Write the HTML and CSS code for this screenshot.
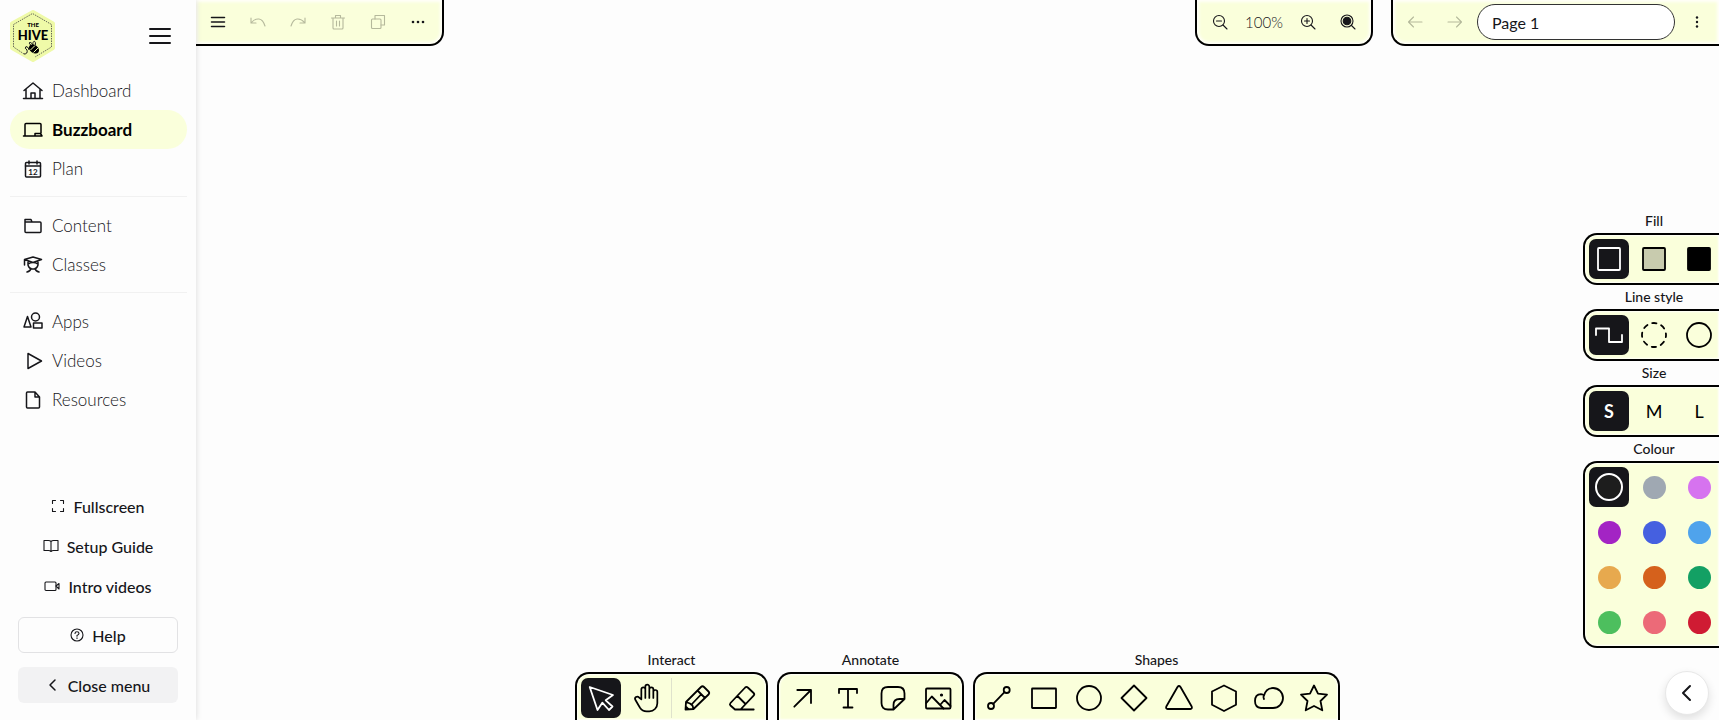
FILE: index.html
```html
<!DOCTYPE html>
<html lang="en">
<head>
  <meta charset="UTF-8">
  <meta name="viewport" content="width=device-width, initial-scale=1.0">
  <title>Buzzboard</title>
  <link rel="stylesheet" href="styles.css">
</head>
<body>
  <aside class="sidebar">
    <div class="sidebar-head">
      <a href="#" class="logo" aria-label="The Hive">
        <svg width="48" height="54" viewBox="0 0 48 54">
          <path class="logo-bg" d="M24 3 L44 14.500 V39 L24 51 L3 39 V14.500 Z"/>
          <path class="logo-line" d="M15 45 L4.500 38 V15.500 L23.500 4.500 L42.500 15.500 V38 L26 48"/>
          <text class="logo-the" x="24" y="18">THE</text>
          <text class="logo-name" x="24" y="31">HIVE</text>
          <path class="logo-bee" d="M15 45 Q19 45 18 41 Q15 39 17 37.500 Q20 38 20 41M23 37 C18 34 21 31 24 36 C23 31 28 31 26 37"/>
          <ellipse cx="25" cy="40" rx="5.500" ry="4" transform="rotate(35 25 40)"/>
          <path class="logo-stripe" d="M26 36.500 L21.500 41 M29 39 L24.500 43.500"/>
        </svg>
      </a>
      <button class="menu-btn" aria-label="Menu">
        <svg class="icon" width="20" height="20" viewBox="0 0 20 20"><path d="M0 3h20M0 10h20M0 17h20"/></svg>
      </button>
    </div>

    <nav class="nav">
      <a href="#" class="nav-link">
        <svg class="icon" width="20" height="20" viewBox="0 0 20 20"><path d="M1 9.500 10 2l9 7.500M3 8v9M17 8v9M.500 17.500h19M8 17v-5h4v5"/></svg>
        Dashboard
      </a>
      <a href="#" class="nav-link active">
        <svg class="icon" width="20" height="20" viewBox="0 0 20 20"><path d="M2 16V4.500Q2 3.500 3 3.500h14q1 0 1 1V13M.500 16H12M12 16v-2.500h5.500L19 16zM13 16h6"/></svg>
        Buzzboard
      </a>
      <a href="#" class="nav-link">
        <svg class="icon" width="20" height="20" viewBox="0 0 20 20"><rect x="2.500" y="3.500" width="15" height="14.500" rx="1"/><path d="M2.500 7h15M6 2v3M14 2v3"/><text class="cal-day" x="10" y="15.500">12</text></svg>
        Plan
      </a>
      <hr>
      <a href="#" class="nav-link">
        <svg class="icon" width="20" height="20" viewBox="0 0 20 20"><path d="M2 15.500v-12h6l1 2.500h8q1 0 1 1v8.500q0 1-1 1H3q-1 0-1-1zM2 6h7"/></svg>
        Content
      </a>
      <a href="#" class="nav-link">
        <svg class="icon" width="20" height="20" viewBox="0 0 20 20"><path d="M1.500 4.500 10 2l8.500 2.500L10 7.500zM1.500 4.500V10M5 6v4q1 4 5 4t5-4V6M5 9q5-3 10 0M8 13.500Q7.500 16 4 17M12 13.500q.500 2.500 4 3.500"/></svg>
        Classes
      </a>
      <hr>
      <a href="#" class="nav-link">
        <svg class="icon" width="20" height="20" viewBox="0 0 20 20"><path d="M4.500 4.500 1 15h7z"/><circle cx="12.500" cy="5" r="4"/><rect x="10.500" y="11" width="8.500" height="5"/></svg>
        Apps
      </a>
      <a href="#" class="nav-link">
        <svg class="icon" width="20" height="20" viewBox="0 0 20 20"><path d="M5 2.500v15L18.500 10z"/></svg>
        Videos
      </a>
      <a href="#" class="nav-link">
        <svg class="icon" width="20" height="20" viewBox="0 0 20 20"><path d="M12 2H4.500q-1 0-1 1v14q0 1 1 1h11q1 0 1-1V7zM12 2v5h4.500"/></svg>
        Resources
      </a>
    </nav>

    <div class="sidebar-foot">
      <button class="foot-btn">
        <svg class="icon thin" width="14" height="14" viewBox="0 0 14 14"><path d="M1.500 4.500v-3h3M9.500 1.500h3v3M12.500 9.500v3h-3M4.500 12.500h-3v-3"/></svg>
        Fullscreen
      </button>
      <button class="foot-btn">
        <svg class="icon thin" width="16" height="14" viewBox="0 0 16 14"><path d="M8 2.500Q7 1.500 5.500 1.500H1v10h4.500Q7 11.500 8 12.500M8 2.500Q9 1.500 10.500 1.500H15v10h-4.500Q9 11.500 8 12.500M8 2.500v10"/></svg>
        Setup Guide
      </button>
      <button class="foot-btn">
        <svg class="icon thin" width="16" height="14" viewBox="0 0 16 14"><rect x="1" y="3" width="11" height="8.500" rx="1"/><path d="M12 7l3-2.500v5.500z"/></svg>
        Intro videos
      </button>
      <button class="foot-btn outlined">
        <svg class="icon thin" width="14" height="14" viewBox="0 0 14 14"><circle cx="7" cy="7" r="6"/><path d="M5 5.500Q5 3.700 7 3.700t2 1.700Q9 6.500 7 7.500v.800M7 9.800v.600"/></svg>
        Help
      </button>
      <button class="foot-btn filled">
        <svg class="icon" width="14" height="14" viewBox="0 0 14 14"><path d="M9 2 4 7l5 5"/></svg>
        Close menu
      </button>
    </div>
  </aside>

  <main class="board">
    <header class="topbar">
      <div class="bar bar-left">
        <button class="bar-btn" aria-label="Board menu"><svg class="icon" width="16" height="16" viewBox="0 0 16 16"><path d="M1.500 3.500h13M1.500 8h13M1.500 12.500h13"/></svg></button>
        <button class="bar-btn" aria-label="Undo" disabled><svg class="icon thin" width="16" height="16" viewBox="0 0 16 16"><path d="M1 4v5h5M1.500 8.500Q5 4.500 9 5t6 7"/></svg></button>
        <button class="bar-btn" aria-label="Redo" disabled><svg class="icon thin" width="16" height="16" viewBox="0 0 16 16"><path d="M15 4v5h-5M14.500 8.500Q11 4.500 7 5t-6 7"/></svg></button>
        <button class="bar-btn" aria-label="Delete" disabled><svg class="icon thin" width="16" height="16" viewBox="0 0 16 16"><path d="M1.500 4h13M3 4v10q0 1 1 1h8q1 0 1-1V4M5.500 4V1.500h5V4M6.500 7v5M9.500 7v5"/></svg></button>
        <button class="bar-btn" aria-label="Duplicate" disabled><svg class="icon thin" width="16" height="16" viewBox="0 0 16 16"><rect x="1.500" y="5" width="9.500" height="9.500" rx="1"/><path d="M5 5V1.500h9.500V11H11"/></svg></button>
        <button class="bar-btn" aria-label="More"><svg class="dots" width="16" height="16" viewBox="0 0 16 16"><circle cx="3" cy="8" r="1.300"/><circle cx="8" cy="8" r="1.300"/><circle cx="13" cy="8" r="1.300"/></svg></button>
      </div>

      <div class="bar bar-zoom">
        <button class="bar-btn" aria-label="Zoom out"><svg class="icon thin" width="16" height="16" viewBox="0 0 16 16"><circle cx="7" cy="7" r="5.500"/><path d="m11 11 4 4M4.500 7h5"/></svg></button>
        <span class="zoom-value">100%</span>
        <button class="bar-btn" aria-label="Zoom in"><svg class="icon thin" width="16" height="16" viewBox="0 0 16 16"><circle cx="7" cy="7" r="5.500"/><path d="m11 11 4 4M4.500 7h5M7 4.500v5"/></svg></button>
        <button class="bar-btn" aria-label="Zoom to fit"><svg class="icon thin" width="16" height="16" viewBox="0 0 16 16"><circle cx="7" cy="7" r="6"/><circle class="solid" cx="7" cy="7" r="3.800"/><path d="m11.500 11.500 3.500 3.500"/></svg></button>
      </div>

      <div class="bar bar-page">
        <button class="bar-btn" aria-label="Previous page" disabled><svg class="icon thin" width="16" height="16" viewBox="0 0 16 16"><path d="M15 8H1.500M6.500 3l-5 5 5 5"/></svg></button>
        <button class="bar-btn" aria-label="Next page" disabled><svg class="icon thin" width="16" height="16" viewBox="0 0 16 16"><path d="M1 8h13.500M9.500 3l5 5-5 5"/></svg></button>
        <input class="page-name" type="text" value="Page 1" aria-label="Page name">
        <button class="bar-btn" aria-label="Page options"><svg class="dots" width="16" height="16" viewBox="0 0 16 16"><circle cx="8" cy="3.500" r="1.200"/><circle cx="8" cy="8" r="1.200"/><circle cx="8" cy="12.500" r="1.200"/></svg></button>
      </div>
    </header>

    <div class="canvas">
      <div class="options">
        <section class="group">
          <h3>Fill</h3>
          <div class="panel swatches">
            <button class="tool active" aria-label="No fill"><svg class="icon" width="28" height="28" viewBox="0 0 28 28"><rect x="3" y="3" width="22" height="22" rx="1"/></svg></button>
            <button class="tool" aria-label="Semi fill"><svg class="icon" width="28" height="28" viewBox="0 0 28 28"><rect x="3" y="3" width="22" height="22" rx="1" fill="#c8cbae"/></svg></button>
            <button class="tool" aria-label="Solid fill"><svg class="icon" width="28" height="28" viewBox="0 0 28 28"><rect x="3" y="3" width="22" height="22" rx="1" fill="#000"/></svg></button>
          </div>
        </section>
        <section class="group">
          <h3>Line style</h3>
          <div class="panel swatches">
            <button class="tool active" aria-label="Square line"><svg class="icon" width="28" height="28" viewBox="0 0 28 28"><path d="M1 14V7.500h13V21h13v-7"/></svg></button>
            <button class="tool" aria-label="Dashed line"><svg class="icon" width="28" height="28" viewBox="0 0 28 28"><circle cx="14" cy="14" r="12" stroke-dasharray="4.400 5.020" stroke-dashoffset="2.200"/></svg></button>
            <button class="tool" aria-label="Solid line"><svg class="icon" width="28" height="28" viewBox="0 0 28 28"><circle cx="14" cy="14" r="12"/></svg></button>
          </div>
        </section>
        <section class="group">
          <h3>Size</h3>
          <div class="panel swatches">
            <button class="tool size active">S</button>
            <button class="tool size">M</button>
            <button class="tool size">L</button>
          </div>
        </section>
        <section class="group">
          <h3>Colour</h3>
          <div class="panel swatches">
            <button class="tool active" aria-label="Black"><span class="dot black"></span></button>
            <button class="tool" aria-label="Grey"><span class="dot grey"></span></button>
            <button class="tool" aria-label="Pink"><span class="dot pink"></span></button>
            <button class="tool" aria-label="Purple"><span class="dot purple"></span></button>
            <button class="tool" aria-label="Blue"><span class="dot blue"></span></button>
            <button class="tool" aria-label="Light blue"><span class="dot sky"></span></button>
            <button class="tool" aria-label="Yellow"><span class="dot yellow"></span></button>
            <button class="tool" aria-label="Orange"><span class="dot orange"></span></button>
            <button class="tool" aria-label="Green"><span class="dot green"></span></button>
            <button class="tool" aria-label="Light green"><span class="dot lime"></span></button>
            <button class="tool" aria-label="Light red"><span class="dot rose"></span></button>
            <button class="tool" aria-label="Red"><span class="dot red"></span></button>
          </div>
        </section>
      </div>
    </div>

    <footer class="bottom">
      <div class="toolbar">
        <section class="group">
          <h3>Interact</h3>
          <div class="panel tools">
            <button class="tool active" aria-label="Select"><svg class="icon" width="28" height="28" viewBox="0 0 28 28"><path d="M2.700 3 26 11l-7.300 5.300 6.800 6.200L22 26l-6.700-7.300L10.500 26z"/></svg></button>
            <button class="tool" aria-label="Hand"><svg class="icon hand" width="28" height="28" viewBox="1 1.500 21 21"><path d="M8 13V5.500a1.500 1.500 0 0 1 3 0V12M11 5.500v-2a1.500 1.500 0 1 1 3 0V12M14 5.500a1.500 1.500 0 0 1 3 0V12M17 7.500a1.500 1.500 0 0 1 3 0V16a6 6 0 0 1-6 6h-2a6 6 0 0 1-5-2.700c-.500-.800-1.600-2.700-3.500-6a1.500 1.500 0 0 1 .500-2 1.900 1.900 0 0 1 2.300.300L8 13"/></svg></button>
            <span class="separator"></span>
            <button class="tool" aria-label="Draw"><svg class="icon" width="28" height="28" viewBox="0 0 28 28"><path d="M2.500 25.500 3 18 18 3q1.500-1.500 3 0l4.500 4.500q1.500 1.500 0 3L10.500 25zM14.500 6.500l7.500 7.500M3 18l4 1.500 2.500 2 1 3.500M8.500 20.500 18 10.500M2.700 22.500l3 3"/></svg></button>
            <button class="tool" aria-label="Eraser"><svg class="icon" width="28" height="28" viewBox="0 0 28 28"><path d="M25.700 25.500H7L2.500 21.500q-1.200-1.200 0-2.500L17.200 3.500q1.300-1.300 2.600 0L25.600 9q1.300 1.300 0 2.700L12.500 25.500M9.500 12l8 8"/></svg></button>
          </div>
        </section>
        <section class="group">
          <h3>Annotate</h3>
          <div class="panel tools">
            <button class="tool" aria-label="Arrow"><svg class="icon" width="28" height="28" viewBox="0 0 28 28"><path d="M5.300 22.700 22 6M8.300 6H22v13"/></svg></button>
            <button class="tool" aria-label="Text"><svg class="icon" width="28" height="28" viewBox="0 0 28 28"><path d="M5 9V5h18v4M14 5v18.500M9.500 23.500h9"/></svg></button>
            <button class="tool" aria-label="Note"><svg class="icon" width="28" height="28" viewBox="0 0 28 28"><path d="M14 25.500H9Q2.500 25.500 2.500 19V9.500Q2.500 3 9 3h10q6.500 0 6.500 6.500V15L14.500 25.500V21q0-6 6-6h5"/></svg></button>
            <button class="tool" aria-label="Image"><svg class="icon" width="28" height="28" viewBox="0 0 28 28"><rect x="2" y="4.500" width="24.500" height="20" rx="1"/><path d="m2.300 19 5.500-6.500L19.500 24.500M16.500 20.500l4-4.500 6 6"/><circle class="solid" cx="17.500" cy="11" r=".700"/></svg></button>
          </div>
        </section>
        <section class="group">
          <h3>Shapes</h3>
          <div class="panel tools">
            <button class="tool" aria-label="Line"><svg class="icon" width="28" height="28" viewBox="0 0 28 28"><circle cx="21.700" cy="6" r="3"/><circle cx="6" cy="22" r="3"/><path d="M8.200 19.800 19.500 8.200"/></svg></button>
            <button class="tool" aria-label="Rectangle"><svg class="icon" width="28" height="28" viewBox="0 0 28 28"><rect x="2" y="4.500" width="24" height="19.500" rx=".500"/></svg></button>
            <button class="tool" aria-label="Ellipse"><svg class="icon" width="28" height="28" viewBox="0 0 28 28"><circle cx="14" cy="14" r="12"/></svg></button>
            <button class="tool" aria-label="Diamond"><svg class="icon" width="28" height="28" viewBox="0 0 28 28"><path d="M14 1.500 26.500 14 14 26.500 1.500 14z"/></svg></button>
            <button class="tool" aria-label="Triangle"><svg class="icon" width="28" height="28" viewBox="0 0 28 28"><path d="M12.500 3q1.500-2 3 0L26.700 22.500q.800 2.200-1.400 2.500H2.700Q.500 24.700 1.300 22.500z"/></svg></button>
            <button class="tool" aria-label="Hexagon"><svg class="icon" width="28" height="28" viewBox="0 0 28 28"><path d="M14 1.500 26 7.500v13.300L14 27 2 20.800V7.500z"/></svg></button>
            <button class="tool" aria-label="Cloud"><svg class="icon" width="28" height="28" viewBox="0 0 28 28"><path d="M6 24Q0 23.500 0 17t6-6.800q1.800 0 3 1.300Q11 4 18 4a10 10 0 0 1 0 20zM9 11.500Q8 13 9 15"/></svg></button>
            <button class="tool" aria-label="Star"><svg class="icon" width="28" height="28" viewBox="0 0 28 28"><path d="m14 1.500 4 8.200 9 1-6.500 6.300 1.800 9.300L14 22l-8.300 4.300L7.500 17 1 10.700l9-1z"/></svg></button>
          </div>
        </section>
      </div>
      <button class="round-btn" aria-label="Collapse"><svg class="icon" width="20" height="20" viewBox="0 0 20 20"><path d="m13 3-7 7 7 7"/></svg></button>
    </footer>
  </main>
</body>
</html>
```

FILE: styles.css
```css
* {
  box-sizing: border-box;
}

body {
  margin: 0;
  min-height: 100vh;
  display: grid;
  grid-template-columns: 196px 1fr;
  font-family: Lato, "Open Sans", sans-serif;
  font-size: 16px;
  color: #16161a;
  background: #fdfdfd;
  overflow: hidden;
}

button {
  padding: 0;
  border: none;
  background: none;
  font: inherit;
  color: inherit;
  cursor: pointer;
}

svg {
  display: block;
  flex: none;
  overflow: visible;
}

.icon {
  fill: none;
  stroke: currentColor;
  stroke-width: 1.5;
  stroke-linecap: round;
  stroke-linejoin: round;
}

.icon.thin {
  stroke-width: 1.1;
}

.icon .solid,
.dots {
  fill: currentColor;
}

/* Sidebar */
.sidebar {
  position: relative;
  z-index: 1;
  display: flex;
  flex-direction: column;
  background: #fdfdfd;
  box-shadow: 0 0 6px rgba(0, 0, 0, 0.15);
}

.sidebar-head {
  display: flex;
  justify-content: space-between;
  align-items: center;
  height: 71px;
  padding: 0 26px 0 9px;
}

.menu-btn .icon {
  stroke-width: 2;
}

.logo {
  color: inherit;
}

.logo-bg {
  fill: #effaa8;
  stroke: #effaa8;
  stroke-width: 4;
  stroke-linejoin: round;
}

.logo-line {
  fill: none;
  stroke: #444;
  stroke-width: 0.8;
  stroke-dasharray: 1.5 1;
}

.logo-the,
.logo-name {
  font-weight: 900;
  text-anchor: middle;
}

.logo-the {
  font-size: 6px;
}

.logo-name {
  font-size: 13px;
}

.logo-bee {
  fill: none;
  stroke: #16161a;
}

.logo-stripe {
  stroke: #effaa8;
}

.nav {
  display: flex;
  flex-direction: column;
  padding: 0 9px 0 10px;
}

.nav-link {
  display: flex;
  align-items: center;
  gap: 9px;
  height: 39px;
  padding-left: 13px;
  border-radius: 20px;
  font-size: 17px;
  font-weight: 300;
  color: #16161a;
  text-decoration: none;
}

.nav-link.active {
  background: #faffdb;
  font-weight: bold;
  color: #000;
}

.nav hr {
  width: 100%;
  margin: 8px 0 9px;
  border: none;
  border-top: 1px solid #f1f1f1;
}

.cal-day {
  font-size: 8px;
  font-weight: bold;
  text-anchor: middle;
  fill: #16161a;
  stroke: none;
}

.sidebar-foot {
  display: flex;
  flex-direction: column;
  margin-top: auto;
  padding: 0 18px 17px;
}

.foot-btn {
  display: flex;
  justify-content: center;
  align-items: center;
  gap: 8px;
  height: 40px;
  font-size: 16px;
  font-weight: 500;
}

.foot-btn.outlined,
.foot-btn.filled {
  height: 36px;
  border-radius: 6px;
}

.foot-btn.outlined {
  margin: 11px 0 14px;
  border: 1px solid #e2e2e4;
}

.foot-btn.filled {
  background: #f2f2f3;
}

/* Board */
.board {
  display: flex;
  flex-direction: column;
  height: 100vh;
  min-width: 0;
}

.topbar {
  display: flex;
  gap: 18px;
}

.bar {
  display: flex;
  align-items: center;
  height: 46px;
  background: #faffdb;
  border: 2px solid #000;
  border-top: none;
  box-shadow: inset 0 0 3px 2px #fffffa;
}

.bar-btn {
  display: flex;
  justify-content: center;
  align-items: center;
  width: 40px;
  height: 40px;
}

.bar-btn:disabled {
  color: #b5b99c;
  cursor: default;
}

.bar-left {
  margin-right: auto;
  padding-right: 4px;
  padding-left: 2px;
  border-left: none;
  border-radius: 0 0 14px 0;
}

.bar-zoom {
  padding: 0 3px;
  border-radius: 0 0 14px 14px;
}

.zoom-value {
  width: 48px;
  font-size: 15px;
  font-weight: 300;
  text-align: center;
}

.bar-page {
  padding-right: 2px;
  padding-left: 2px;
  border-right: none;
  border-radius: 0 0 0 14px;
}

.page-name {
  width: 198px;
  height: 36px;
  margin: 0 2px;
  padding: 0 14px;
  border: 1px solid #333;
  border-radius: 18px;
  background: #fff;
  font: inherit;
  color: inherit;
}

.canvas {
  flex: 1;
  display: flex;
  justify-content: flex-end;
  align-items: flex-end;
}

.options {
  display: flex;
  flex-direction: column;
}

.options h3 {
  padding-left: 6px;
}

.group h3 {
  margin: 0;
  font-size: 14px;
  font-weight: 500;
  line-height: 24px;
  text-align: center;
}

.panel {
  gap: 5px;
  padding: 4px;
  background: #faffdb;
  border: 2px solid #000;
  box-shadow: inset 0 0 2px 1px #fffffa;
}

.swatches {
  display: grid;
  grid-template-columns: repeat(3, 40px);
  padding-right: 0;
  border-right: none;
  border-radius: 14px 0 0 14px;
}

.tools {
  display: flex;
  padding-bottom: 2px;
  border-bottom: none;
  border-radius: 14px 14px 0 0;
}

.tool {
  display: flex;
  justify-content: center;
  align-items: center;
  width: 40px;
  height: 40px;
  border-radius: 7px;
  color: #000;
}

.tool .icon {
  stroke-width: 1.8;
}

.tool .hand {
  stroke-width: 1.3;
}

.tool.active {
  background: #16161a;
  color: #fff;
}

.size {
  font-size: 18px;
}

.size.active {
  font-weight: bold;
}

.separator {
  width: 1px;
  background: #dfe2cc;
}

.dot {
  width: 23px;
  height: 23px;
  border-radius: 50%;
}

.active .dot {
  width: 28px;
  height: 28px;
  border: 2px solid #fff;
}

.black { background: #1d1d1d; }
.grey { background: #9fa8b2; }
.pink { background: #d673ef; }
.purple { background: #a324c4; }
.blue { background: #4560e0; }
.sky { background: #4fa3ec; }
.yellow { background: #e7a94e; }
.orange { background: #d5611c; }
.green { background: #13a064; }
.lime { background: #4dbf5e; }
.rose { background: #ec6a78; }
.red { background: #cf1b33; }

.bottom {
  display: grid;
  grid-template-columns: 1fr auto 1fr;
}

.toolbar {
  grid-column: 2;
  display: flex;
  gap: 9px;
}

.round-btn {
  display: flex;
  justify-content: center;
  align-items: center;
  align-self: end;
  justify-self: end;
  width: 44px;
  height: 44px;
  margin: 0 10px 5px 0;
  border: 1px solid #e8e8e8;
  border-radius: 50%;
  background: #fff;
  box-shadow: 0 4px 10px rgba(0, 0, 0, 0.12);
}

.round-btn .icon {
  stroke-width: 2;
}
```
